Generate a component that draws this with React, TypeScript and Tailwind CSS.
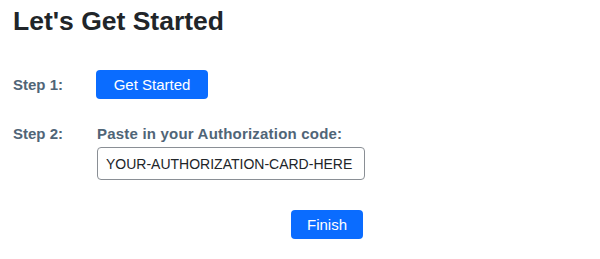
export default function App() {
  return (
    <div
      className="w-[600px] h-[259px] bg-white pl-[13px] pt-[5px]"
      style={{ fontFamily: '"Liberation Sans", Arial, sans-serif' }}
    >
      <h1 className="text-[26.5px] leading-[32px] font-bold text-[#212529]">Let's Get Started</h1>

      {/* Step 1 */}
      <div className="mt-[33px] flex items-center">
        <span className="w-[83px] text-[15px] leading-[18px] font-bold text-[#506577]">Step 1:</span>
        <button className="w-[112px] h-[29px] rounded-[4px] bg-[#0a6cff] text-white text-[15px] leading-[18px]">
          Get Started
        </button>
      </div>

      {/* Step 2 */}
      <div className="mt-[26px] flex">
        <span className="w-[84px] text-[15px] leading-[18px] font-bold text-[#506577]">Step 2:</span>
        <div className="flex flex-col">
          <label className="text-[15px] leading-[18px] font-bold tracking-[0.2px] text-[#506577]">
            Paste in your Authorization code:
          </label>
          <input
            readOnly
            value="YOUR-AUTHORIZATION-CARD-HERE"
            className="mt-[4px] w-[268px] h-[33px] rounded-[4px] border border-[#8a8f95] px-[8px] text-[14px] text-[#212529] outline-none"
          />
        </div>
      </div>

      <button className="mt-[30px] ml-[278px] w-[72px] h-[29px] rounded-[4px] bg-[#0a6cff] text-white text-[15px] leading-[18px]">
        Finish
      </button>
    </div>
  );
}
